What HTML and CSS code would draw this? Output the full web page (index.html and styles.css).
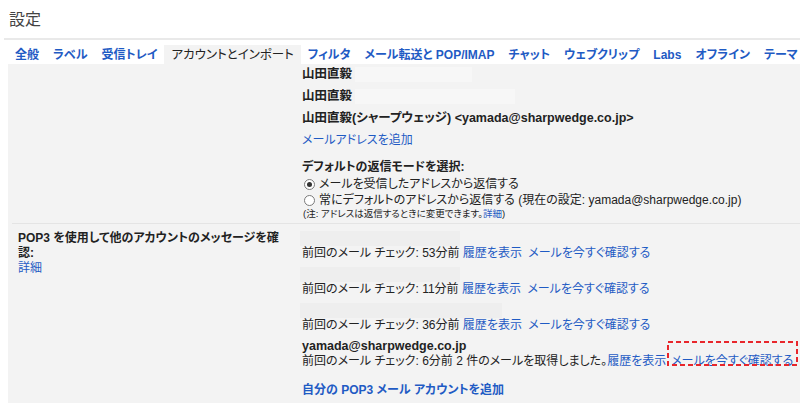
FILE: index.html
```html
<!DOCTYPE html>
<html lang="ja">
<head>
<meta charset="utf-8">
<title>設定</title>
<link rel="stylesheet" href="styles.css">
</head>
<body>
<div class="page">
  <header class="title">設定</header>
  <div class="rule"></div>
  <nav class="tabs">
    <a class="tab">全般</a>
    <a class="tab">ラベル</a>
    <a class="tab">受信トレイ</a>
    <span class="tab active">アカウントとインポート</span>
    <a class="tab">フィルタ</a>
    <a class="tab">メール転送と POP/IMAP</a>
    <a class="tab">チャット</a>
    <a class="tab">ウェブクリップ</a>
    <a class="tab">Labs</a>
    <a class="tab">オフライン</a>
    <a class="tab">テーマ</a>
  </nav>
  <main class="content">
    <section class="sec sec-send">
      <div class="left"></div>
      <div class="right">
        <div class="name-row"><b>山田直毅</b><span class="redact r1"></span></div>
        <div class="name-row"><b>山田直毅</b><span class="redact r2"></span></div>
        <div class="name-row"><b>山田直毅(シャープウェッジ) &lt;yamada@sharpwedge.co.jp&gt;</b></div>
        <div class="name-row"><a class="link">メールアドレスを追加</a></div>
        <div class="reply-head">デフォルトの返信モードを選択:</div>
        <label class="radio-row"><span class="radio checked"></span>メールを受信したアドレスから返信する</label>
        <label class="radio-row"><span class="radio"></span>常にデフォルトのアドレスから返信する (現在の設定: yamada@sharpwedge.co.jp)</label>
        <div class="note">(注: アドレスは返信するときに変更できます。<a class="link">詳細</a>)</div>
      </div>
    </section>
    <div class="sep"></div>
    <section class="sec sec-pop">
      <div class="left pop-left">
        <div class="pop-title">POP3 を使用して他のアカウントのメッセージを確認:</div>
        <a class="link">詳細</a>
      </div>
      <div class="right">
        <div class="acct">
          <div class="acct-mail"><span class="redact r3"></span></div>
          <div class="acct-check">前回のメール チェック: 53分前 <a class="link">履歴を表示</a> <a class="link now">メールを今すぐ確認する</a></div>
        </div>
        <div class="acct">
          <div class="acct-mail"><span class="redact r3"></span></div>
          <div class="acct-check">前回のメール チェック: 11分前 <a class="link">履歴を表示</a> <a class="link now">メールを今すぐ確認する</a></div>
        </div>
        <div class="acct">
          <div class="acct-mail"><span class="redact r4"></span></div>
          <div class="acct-check">前回のメール チェック: 36分前 <a class="link">履歴を表示</a> <a class="link now">メールを今すぐ確認する</a></div>
        </div>
        <div class="acct">
          <div class="acct-mail"><b>yamada@sharpwedge.co.jp</b></div>
          <div class="acct-check">前回のメール チェック: 6分前 2 件のメールを取得しました。<a class="link">履歴を表示</a><span class="marked"><a class="link">メールを今すぐ確認する</a><svg class="mark" viewBox="0 0 131 25" preserveAspectRatio="none"><rect x="1" y="1" width="129" height="23" fill="none" stroke="#e8262b" stroke-width="2" stroke-dasharray="5 3"/></svg></span></div>
        </div>
        <div class="add-pop"><a class="link strong">自分の POP3 メール アカウントを追加</a></div>
      </div>
    </section>
  </main>
</div>
</body>
</html>
```

FILE: styles.css
```css
html, body {
  margin: 0;
  padding: 0;
  background: #ffffff;
  overflow: hidden;
}
body {
  width: 800px;
  height: 406px;
  font-family: "Liberation Sans", Arial, "Noto Sans CJK JP", sans-serif;
  font-size: 12px;
  color: #222222;
  font-feature-settings: "palt" 1;
}
.page {
  width: 800px;
}
.title {
  height: 38px;
  box-sizing: border-box;
  padding: 10px 0 0 9px;
  font-size: 16px;
  line-height: 20px;
  color: #444444;
}
.rule {
  height: 2px;
  margin-left: 4px;
  background: #e9e9e9;
}
.tabs {
  margin: 5px 0 0 8px;
  height: 19px;
  display: flex;
  white-space: nowrap;
  overflow: hidden;
}
.tab {
  padding: 1px 7px 0;
  line-height: 18px;
  font-weight: bold;
  color: #1f5bc4;
  flex: none;
}
.tab.active {
  background: #f3f3f3;
  color: #222222;
  font-weight: normal;
  font-size: 12.5px;
}
.content {
  margin-left: 8px;
  background: #f3f3f3;
  height: 339px;
}
.sec {
  display: grid;
  grid-template-columns: 294px 1fr;
}
.sec-send {
  padding: 3px 0 3px;
}
.right {
  line-height: 15px;
  white-space: nowrap;
}
.right b {
  font-size: 12.5px;
}
.name-row {
  height: 15px;
  padding-bottom: 7px;
  display: flex;
  align-items: center;
}
.redact {
  display: inline-block;
  height: 15px;
  background: #f7f7f7;
}
.r1 { width: 117px; margin-left: 3px; }
.r2 { width: 160px; margin-left: 3px; }
.r3 { width: 160px; margin-left: -2px; background: #eeeeee; }
.r4 { width: 202px; margin-left: -2px; background: #eeeeee; }
.link {
  color: #1f5bc4;
  cursor: pointer;
}
.link.now {
  margin-left: 3px;
}
.link.strong {
  font-weight: bold;
}
.reply-head {
  padding-top: 5px;
  font-weight: bold;
  height: 15px;
}
.radio-row {
  display: flex;
  align-items: center;
  height: 16px;
  padding-top: 1px;
}
.radio-row + .radio-row {
  padding-top: 0;
}
.radio {
  width: 9px;
  height: 9px;
  border: 1px solid #7a7a7a;
  border-radius: 50%;
  background: #ffffff;
  margin: 0 4px 0 2px;
  position: relative;
  flex: none;
}
.radio.checked::after {
  content: "";
  position: absolute;
  left: 2px;
  top: 2px;
  width: 5px;
  height: 5px;
  border-radius: 50%;
  background: #333333;
}
.note {
  font-size: 9.5px;
  line-height: 12px;
  height: 12px;
  padding-left: 1px;
}
.sep {
  height: 1px;
  margin-left: 4px;
  background: #e4e4e4;
}
.sec-pop {
  padding: 7px 0 0;
}
.pop-left {
  padding-left: 10px;
  line-height: 15px;
  padding-right: 18px;
}
.pop-title {
  font-weight: bold;
}
.acct {
  padding-bottom: 6px;
}
.acct-mail, .acct-check {
  height: 15px;
}
.acct:last-of-type .acct-check {
  padding-top: 1px;
}
.marked {
  position: relative;
  display: inline-block;
  margin-left: 5px;
}
.mark {
  position: absolute;
  left: -4px;
  top: -13px;
  width: 131px;
  height: 25px;
}
.add-pop {
  padding-top: 8px;
}
```
